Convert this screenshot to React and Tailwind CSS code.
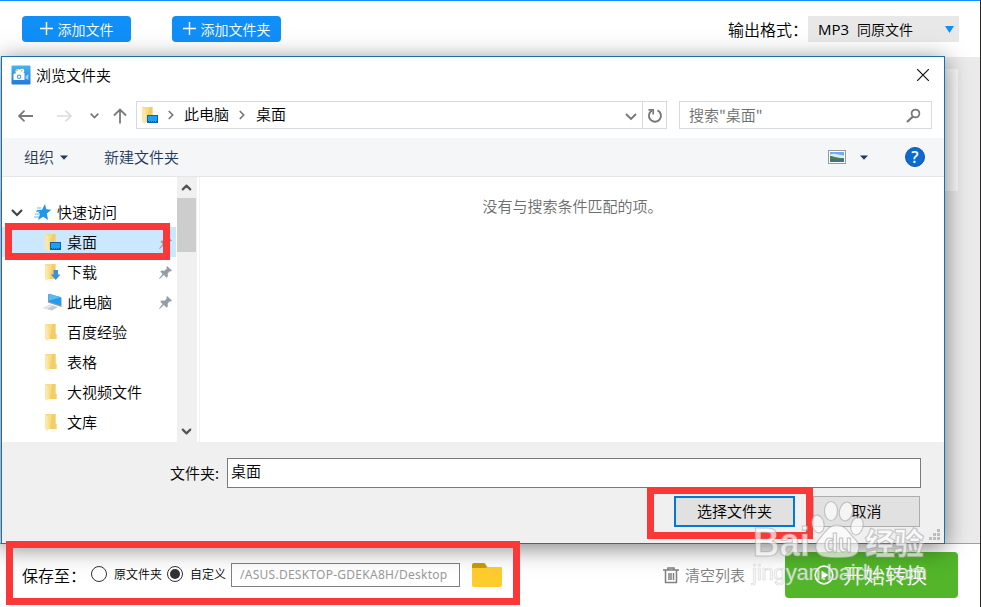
import { ChevronDown, ChevronRight, ChevronUp } from "lucide-react";

const places = [
  { name: "桌面", icon: "desktop", pinned: true, active: true },
  { name: "下载", icon: "download", pinned: true },
  { name: "此电脑", icon: "pc", pinned: true },
  { name: "百度经验", icon: "folder" },
  { name: "表格", icon: "folder" },
  { name: "大视频文件", icon: "folder" },
  { name: "文库", icon: "folder" },
];

function FolderIcon({ kind }) {
  if (kind === "pc") {
    return (
      <svg width="20" height="18" viewBox="0 0 20 18" className="-ml-px shrink-0">
        <path d="M0 15l7-3.500 8 2.500-6 3.500z" fill="#c3cbd1" />
        <path d="M0 15l7-3.500 3 1-6 3.500z" fill="#e3e7ea" />
        <path d="M5 1l13.500 3.500v9.500L5 9.500z" fill="#8a98a3" />
        <path d="M6 .8l12 3.500v8L6 8.500z" fill="#1f9cf0" />
        <path d="M6 .8l12 3.500L6 7.500z" fill="#57bbfa" />
      </svg>
    );
  }
  return (
    <svg width="18" height="18" viewBox="0 0 18 18" className="shrink-0">
      <path d="M1 1h10.500v10h1v5H1z" fill="#f8db85" />
      <path d="M8 1h3.500v10h1v5H6z" fill="#f2cd68" />
      <path d="M1 1l3.500 2.500V18L1 16z" fill="#fde7a6" />
      {kind === "desktop" && (
        <g>
          <rect x="6.500" y="9.500" width="10" height="7" fill="#18a0fb" stroke="#0c62a8" />
          <path d="M7 15.500h9" stroke="#0c4f8a" strokeDasharray="1 1" />
        </g>
      )}
      {kind === "download" && (
        <path d="M9.500 7h4.500v4.500h2.500l-4.700 5.500L7 11.500h2.500z" fill="#3f8ed8" />
      )}
    </svg>
  );
}

function Pin() {
  return (
    <svg width="13" height="13" viewBox="0 0 13 13" className="shrink-0">
      <path d="M8 0l5 4.500-1.300.9-1-.2-2 2.300.1 3-1.200 1.200-2.700-2.600L.6 13l-.5-.4L3.600 8 1.300 5.800l1.200-1.200 2.900.1 2.400-2.300-.4-1.200z" fill="#929da6" />
    </svg>
  );
}

function AddButton({ children, className }) {
  return (
    <button className={`flex h-[26px] w-[109px] items-center justify-center rounded-[4px] bg-[#118ff8] text-[14px] text-white ${className}`}>
      <svg width="14" height="14" viewBox="0 0 14 14" className="mr-1 shrink-0">
        <path d="M6.500 0v13M0 6.500h13" stroke="#fff" strokeWidth="1.400" />
      </svg>
      <span className="whitespace-nowrap">{children}</span>
    </button>
  );
}

function Header() {
  return (
    <header className="flex h-[57px] items-start border-t-1 border-[#118ff8] bg-white pt-[15px] pr-[21px] pl-[22px]">
      <AddButton className="mr-[41px]">添加文件</AddButton>
      <AddButton>添加文件夹</AddButton>
      <div className="ml-auto flex h-[26px] items-center">
        <span className="w-20 text-[16px] whitespace-nowrap">输出格式：</span>
        <div className="flex h-[26px] w-[151px] items-center bg-[#e8e8e8] pr-[5px] pl-[10px] text-[14px]">
          <span className="w-[39px] font-['Open_Sans'] text-[15px] font-normal">MP3</span>
          <span>同原文件</span>
          <svg width="9" height="7" viewBox="0 0 9 7" className="ml-auto">
            <path d="M0 0h9L4.500 7z" fill="#118ff8" />
          </svg>
        </div>
      </div>
    </header>
  );
}

function TitleBar() {
  return (
    <div className="flex h-[44px] items-start pt-2 pr-[15px] pl-[9px]">
      <svg width="20" height="20" viewBox="0 0 20 20" className="mr-[5px]">
        <defs>
          <linearGradient id="app-icon" x2="0" y2="1">
            <stop stopColor="#46b6ef" />
            <stop offset="1" stopColor="#2578d8" />
          </linearGradient>
        </defs>
        <rect x=".5" y=".5" width="19" height="19" rx="1" fill="url(#app-icon)" />
        <circle cx="7" cy="6.500" r="2.500" fill="#fff" />
        <circle cx="11" cy="6" r="2.300" fill="#fff" />
        <path d="M5 6l2-1.500M10 6.500l1.500-1.500" stroke="#f5b942" strokeWidth="1.400" />
        <path d="M2.500 9l3-1h8v7h-11z" fill="#fff" />
        <path d="M14.500 11l3-2v6l-3-1.500z" fill="#7fd6fa" />
        <circle cx="8" cy="11.800" r="1.700" fill="none" stroke="#4d9fe8" strokeWidth="1.100" />
      </svg>
      <span className="text-[15px] leading-5">浏览文件夹</span>
      <svg width="12" height="12" viewBox="0 0 12 12" className="mt-1 ml-auto">
        <path d="M0 0l12 12M12 0L0 12" stroke="#111" strokeWidth="1.200" />
      </svg>
    </div>
  );
}

function AddressRow() {
  return (
    <div className="flex h-[37px] items-start pr-3 pl-4">
      <div className="flex h-7 w-[118px] items-center pt-[2px]">
        <svg width="16" height="12" viewBox="0 0 16 12">
          <path d="M15 6H1M6.500 .7L1 6l5.500 5.300" fill="none" stroke="#7a7a7a" strokeWidth="1.800" />
        </svg>
        <svg width="16" height="12" viewBox="0 0 16 12" className="ml-[23px]">
          <path d="M0 6h14M8.500 .7L14 6l-5.500 5.300" fill="none" stroke="#dcdcdc" strokeWidth="1.700" />
        </svg>
        <svg width="9" height="6" viewBox="0 0 9 6" className="ml-[17px]">
          <path d="M.7.7l3.800 3.800L8.300.7" fill="none" stroke="#767676" strokeWidth="1.700" />
        </svg>
        <svg width="14" height="16" viewBox="0 0 14 16" className="ml-[14px]">
          <path d="M7 15.500V1.500M1 7.500l6-6 6 6" fill="none" stroke="#7a7a7a" strokeWidth="1.800" />
        </svg>
      </div>
      <div className="flex h-7 w-[531px] items-center border border-[#d9d9d9] pl-1">
        <FolderIcon kind="desktop" />
        <ChevronRight size={14} strokeWidth={3} className="ml-[5px] text-[#777]" />
        <span className="mb-[2px] ml-[6px] text-[15px]">此电脑</span>
        <ChevronRight size={14} strokeWidth={3} className="ml-[6px] text-[#777]" />
        <span className="mb-[2px] ml-[7px] text-[15px]">桌面</span>
        <svg width="12" height="8" viewBox="0 0 12 8" className="mt-1 mr-[5px] ml-auto">
          <path d="M1 1l5 5 5-5" fill="none" stroke="#777" strokeWidth="1.900" />
        </svg>
        <div className="flex h-full w-6 items-center justify-center border-l border-[#d9d9d9]">
          <svg width="16" height="16" viewBox="0 0 16 16" className="mt-[2px]">
            <path d="M10.500 2.300a6 6 0 1 1-5.500.2" fill="none" stroke="#777" strokeWidth="1.900" />
            <path d="M1.500 1.800h4.700v4.700" fill="none" stroke="#777" strokeWidth="1.700" />
          </svg>
        </div>
      </div>
      <div className="ml-3 flex h-7 w-[253px] items-center justify-between border border-[#d9d9d9] pr-[10px] pl-[9px]">
        <span className="text-[15px] text-[#6e6e6e]">搜索"桌面"</span>
        <svg width="15" height="15" viewBox="0 0 15 15" className="mt-px">
          <circle cx="9.500" cy="5.500" r="3.900" fill="none" stroke="#777" strokeWidth="1.800" />
          <path d="M7 8.500L1 14" stroke="#777" strokeWidth="2.200" />
        </svg>
      </div>
    </div>
  );
}

function Caret() {
  return (
    <svg width="8" height="5" viewBox="0 0 8 5">
      <path d="M0 .5h8L4 4.700z" fill="#1e3a5c" />
    </svg>
  );
}

function Toolbar() {
  return (
    <div className="flex h-[39px] items-center border-b border-[#e4e7ea] bg-[#f4f6f8] pr-[19px] pl-[22px] text-[15px] text-[#1e395b]">
      <span className="mr-[6px]">组织</span>
      <Caret />
      <span className="ml-9">新建文件夹</span>
      <svg width="18" height="14" viewBox="0 0 18 14" className="mr-[14px] ml-auto">
        <rect x=".5" y=".5" width="17" height="13" fill="#fff" stroke="#9a9a9a" />
        <rect x="2" y="2" width="14" height="10" fill="#6fabf0" />
        <path d="M2 4.500c4-2 8 0 14 1V9H2z" fill="#d9ecf8" />
        <path d="M2 6c4 0 5 2 14 2v1.500H2z" fill="#4d8056" />
        <path d="M2 9h14v3H2z" fill="#3d718c" />
      </svg>
      <Caret />
      <span className="ml-[37px] flex size-5 items-center justify-center rounded-full border border-[#1258a0] bg-[#0b6bd0] font-['Open_Sans'] text-[16px] leading-none font-semibold text-white">?</span>
    </div>
  );
}

function Sidebar() {
  return (
    <div className="w-[175px] pt-5 text-[15px]">
      <div className="flex h-[30px] items-center pl-[9px]">
        <svg width="12" height="8" viewBox="0 0 12 8" className="mt-[2px]">
          <path d="M1 1l5 5 5-5" fill="none" stroke="#444" strokeWidth="2.200" />
        </svg>
        <svg width="18" height="17" viewBox="0 0 18 17" className="ml-[11px]">
          <path d="M11 0l1.300 5.300 5 .5-4.500 3.700 1.300 6.500-4.900-3.300L4 16l2-6-3.500-4 5.500-.3z" fill="#2196e8" />
          <path d="M3 4h4M2 7.500h4M1 10h5M0 13h5" stroke="#63b9f2" strokeWidth="1" />
        </svg>
        <span className="ml-[5px]">快速访问</span>
      </div>
      {places.map((p) => (
        <div
          key={p.name}
          className={p.active ? "flex h-[30px] w-[174px] items-center bg-[#cce8ff] pr-1 pl-[42px]" : "flex h-[30px] w-[174px] items-center pr-1 pl-[42px]"}
        >
          <div className="flex w-[23px] items-center">
            <FolderIcon kind={p.icon} />
          </div>
          <span className="mr-auto">{p.name}</span>
          {p.pinned && <Pin />}
        </div>
      ))}
    </div>
  );
}

function Dialog() {
  return (
    <section className="absolute top-[56px] left-px flex h-[488px] w-[944px] flex-col border border-[#1b6eb2] bg-white shadow-[0_4px_22px_rgba(0,0,0,0.5)]">
      <TitleBar />
      <AddressRow />
      <Toolbar />
      <div className="flex h-[265px]">
        <Sidebar />
        <div className="flex w-5 flex-col items-center bg-[#f0f0f0] pr-px">
          <div className="flex h-[21px] items-center"><ChevronUp size={15} strokeWidth={3.500} className="text-[#555]" /></div>
          <div className="h-[54px] w-[19px] self-start bg-[#cdcdcd]" />
          <div className="mt-auto flex h-[21px] items-center"><ChevronDown size={15} strokeWidth={3.500} className="text-[#555]" /></div>
        </div>
        <div className="ml-[2px] flex-1 border-l border-[#f3f3f3] pt-[18px] pl-px text-center text-[15px] leading-[22px] text-[#6d6d6d]">
          没有与搜索条件匹配的项。
        </div>
      </div>
      <div className="flex flex-1 flex-col bg-[#f0f0f0] pt-4 pr-[23px]">
        <div className="flex items-center">
          <span className="w-[225px] pr-[8px] text-right text-[15px]">文件夹:</span>
          <div className="h-[30px] flex-1 border border-[#7a7a7a] bg-white pl-[3px] text-[15px] leading-6">桌面</div>
        </div>
        <div className="mt-2 flex justify-end gap-[18px] pr-px text-[15px]">
          <button className="h-[31px] w-[121px] border-2 border-[#0078d7] bg-[#e1e1e1]">选择文件夹</button>
          <button className="h-[31px] w-[107px] border border-[#adadad] bg-[#e1e1e1]">取消</button>
        </div>
      </div>
      <svg width="12" height="12" viewBox="0 0 12 12" className="absolute right-[3px] bottom-[2px]">
        <path d="M8 0h3v3H8zM4 4h3v3H4zM8 4h3v3H8zM0 8h3v3H0zM4 8h3v3H4zM8 8h3v3H8z" fill="#bdbdbd" />
      </svg>
    </section>
  );
}

function Radio({ checked }) {
  return (
    <span className="mb-[3px] flex size-4 items-center justify-center rounded-full border border-[#333] bg-white">
      {checked && <span className="size-[10px] rounded-full bg-[#333]" />}
    </span>
  );
}

function Footer() {
  return (
    <footer className="flex h-16 items-center border-t border-[#a0a0a0] bg-white pr-[22px] pl-[22px]">
      <span className="mb-[2px] w-[69px] text-[16px] whitespace-nowrap">保存至：</span>
      <Radio />
      <span className="mr-[5px] mb-[3px] ml-[7px] text-[12px]">原文件夹</span>
      <Radio checked />
      <span className="mr-[5px] mb-[3px] ml-[7px] text-[12px]">自定义</span>
      <div className="mb-px flex h-6 w-[229px] items-center overflow-hidden border border-[#808080] bg-white pl-2 font-['Noto_Sans'] text-[12px] font-normal tracking-[0.26px] whitespace-nowrap text-[#999]">
        /ASUS.DESKTOP-GDEKA8H/Desktop
      </div>
      <svg width="30" height="24" viewBox="0 0 30 24" className="mb-[2px] ml-3">
        <path d="M0 2a2 2 0 0 1 2-2h10c2 0 2 4 4 4v4H0z" fill="#c99c07" />
        <path d="M0 5h13l3-1h13a1 1 0 0 1 1 1v17a2 2 0 0 1-2 2H2a2 2 0 0 1-2-2z" fill="#ffcc2e" />
      </svg>
      <svg width="16" height="17" viewBox="0 0 16 17" className="mb-px ml-auto">
        <path d="M0 3h16M5 3V1h6v2M2.500 3v12.500h11V3M6 6v7M8 6v7M10.500 6v7" fill="none" stroke="#808080" strokeWidth="1.500" />
      </svg>
      <span className="mb-px ml-[6px] text-[15px] text-[#808080]">清空列表</span>
      <button className="mb-[2px] ml-10 flex h-[46px] w-[173px] items-center rounded-[4px] bg-[#52b52a] pl-[29px] text-[21px] text-white">
        <svg width="20" height="20" viewBox="0 0 20 20" className="mr-[9px]">
          <circle cx="10" cy="10" r="8.800" fill="none" stroke="#fff" strokeWidth="1.800" />
          <path d="M7.500 5.500l7 4.500-7 4.500z" fill="#fff" />
        </svg>
        开始转换
      </button>
    </footer>
  );
}

function Watermark() {
  return (
    <svg width="190" height="100" viewBox="0 0 190 100" className="pointer-events-none absolute top-[496px] left-[748px]">
      <g fill="#fff" fillOpacity=".66" stroke="#999" strokeOpacity=".5" strokeWidth="1.200">
        <ellipse cx="83" cy="15" rx="6.500" ry="9.500" />
        <ellipse cx="98" cy="15.500" rx="6.500" ry="9.500" transform="rotate(12 98 15.500)" />
        <ellipse cx="70" cy="28" rx="6" ry="9" transform="rotate(-12 70 28)" />
        <ellipse cx="109" cy="30" rx="6" ry="9" transform="rotate(14 109 30)" />
        <path d="M89 29c9 0 12 9 17 13 8 7 6 18-5 19-8 1-15 1-23 0-11-1-13-12-6-19 5-5 8-13 17-13z" />
        <text x="5" y="60" fontSize="40" fontWeight="700" fontFamily="Liberation Sans" textLength="57" lengthAdjust="spacingAndGlyphs">Bai</text>
        <text x="117" y="58" fontSize="30" fontWeight="900" fontFamily="Noto Sans CJK SC" textLength="59">经验</text>
        <text x="76" y="56" fontSize="25" fontWeight="700" fontFamily="Liberation Sans" stroke="#888" textLength="28" lengthAdjust="spacingAndGlyphs">du</text>
      </g>
      <text x="4" y="84" fontSize="22" fontFamily="Liberation Sans" fontWeight="400" fill="#fff" fillOpacity=".75" stroke="#bbb" strokeOpacity=".6" strokeWidth=".7" textLength="175">jingyan.baidu.com</text>
    </svg>
  );
}

export default function App() {
  return (
    <div className="relative h-[607px] w-[981px] overflow-hidden border-r border-[#2b2420] bg-[#ebebeb] font-['Noto_Sans_CJK_SC',sans-serif] [font-weight:350] text-black select-none">
      <Header />
      <main className="h-[486px] pt-3 pr-[22px]">
        <div className="h-[122px] bg-[#fafafa]" />
      </main>
      <Footer />
      <Dialog />
      {/* highlighted steps */}
      <div className="absolute top-[223px] left-[5px] h-[37px] w-[165px] border-[7px] border-[#fb3838]" />
      <div className="absolute top-[487px] left-[647px] h-[52px] w-[166px] border-[7px] border-[#fb3838]" />
      <div className="absolute top-[541px] left-[6px] h-[64px] w-[514px] border-[7px] border-[#fb3838]" />
      <Watermark />
    </div>
  );
}
